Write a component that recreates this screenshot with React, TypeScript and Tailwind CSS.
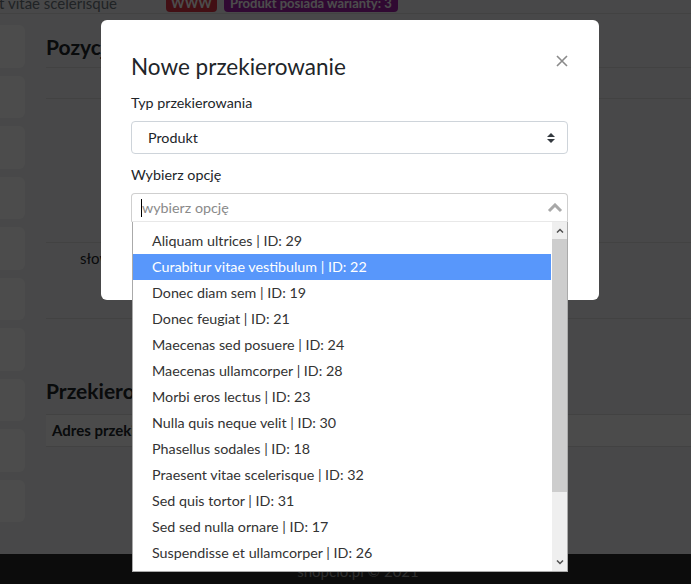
import { useState } from 'react';

const options = [
  { name: 'Aliquam ultrices', id: 29 },
  { name: 'Curabitur vitae vestibulum', id: 22 },
  { name: 'Donec diam sem', id: 19 },
  { name: 'Donec feugiat', id: 21 },
  { name: 'Maecenas sed posuere', id: 24 },
  { name: 'Maecenas ullamcorper', id: 28 },
  { name: 'Morbi eros lectus', id: 23 },
  { name: 'Nulla quis neque velit', id: 30 },
  { name: 'Phasellus sodales', id: 18 },
  { name: 'Praesent vitae scelerisque', id: 32 },
  { name: 'Sed quis tortor', id: 31 },
  { name: 'Sed sed nulla ornare', id: 17 },
  { name: 'Suspendisse et ullamcorper', id: 26 },
  { name: 'Vivamus eget nibh', id: 25 },
];

function Background() {
  return (
    <div className="flex h-[584px] flex-col overflow-hidden bg-[#f1f2f4] text-[#212529]">
      {/* cut-off table row */}
      <div className="flex h-[14px] shrink-0 items-end border-b border-[#dcdcdc] text-[15px] whitespace-nowrap">
        <div className="flex w-[117px] justify-end overflow-hidden leading-[20px] text-[#6c757d]">
          Praesent vitae scelerisque
        </div>
        <div className="ml-[49px] flex h-full items-end gap-[7px] pb-[1px]">
          <span className="rounded bg-[#dc3545] px-[5px] text-[13px] leading-[18px] font-bold text-white">WWW</span>
          <span className="rounded bg-[#a020a8] px-[6px] text-[13px] leading-[18px] font-bold text-white">
            Produkt posiada warianty: 3
          </span>
        </div>
      </div>

      <div className="flex flex-1">
        {/* sidebar tiles */}
        <div className="flex w-[25px] shrink-0 flex-col gap-[8px] pt-[11px]">
          {Array.from({ length: 10 }).map((_, i) => (
            <div key={i} className="h-[42.5px] rounded-r-md bg-white" />
          ))}
        </div>

        <div className="flex-1 pl-[21px]">
          <h2 className="pt-[21px] text-[21px] leading-[24px] font-bold">Pozycje menu</h2>
          <div className="mt-[8px] h-[32px] border-y border-[#dcdcdc]" />
          <div className="h-[143px]" />
          <div className="flex h-[77px] items-start border-y border-[#dcdcdc] pl-[34px] pt-[4px] text-[15px]">
            słowa kluczowe
          </div>
          <h2 className="mt-[60px] text-[21px] leading-[24px] font-bold">Przekierowania</h2>
          <div className="mt-[11px] flex h-[33px] items-center border-y border-[#dcdcdc] bg-[#fafafa] pl-[6px] text-[15px] font-bold">
            Adres przekierowania
          </div>
        </div>
      </div>

      <div className="flex h-[30px] shrink-0 items-center justify-center bg-[#2b2b2b] pl-[25px] pt-[5px] text-[15px] text-[#9a9a9a]">
        shopcio.pl © 2021
      </div>
    </div>
  );
}

export default function App() {
  const [active] = useState(1);

  return (
    <div className="relative font-[Lato,sans-serif]">
      <Background />

      {/* Modal */}
      <div className="fixed inset-0 bg-black/70">
        <div className="ml-[101px] mt-[20px] w-[498px] rounded-md bg-white pl-[30px] pr-[31px] pt-[30px] pb-[30px] text-[#212529]">
          <div className="flex items-start justify-between">
            <h2 className="text-[22.5px] leading-[34px]">Nowe przekierowanie</h2>
            <svg width="12" height="12" viewBox="0 0 12 12" className="mt-[5px]">
              <path d="M1 1 L11 11 M11 1 L1 11" stroke="#8a8a8a" strokeWidth="1.6" />
            </svg>
          </div>

          <div className="mt-[8px] text-[14.3px] leading-[22px]">Typ przekierowania</div>
          <div className="mt-[7px] flex h-[33px] items-center justify-between rounded border border-[#ced4da] pl-[16px] pr-[12px] text-[14.3px]">
            <span>Produkt</span>
            <svg width="8" height="10" viewBox="0 0 8 10">
              <path d="M4 0 L8 4 L0 4 Z M0 6 L8 6 L4 10 Z" fill="#343a40" />
            </svg>
          </div>

          <div className="mt-[10px] text-[14.3px] leading-[22px]">Wybierz opcję</div>
          <div className="relative mt-[7px]">
            <div className="flex h-[29px] items-center justify-between rounded-t border border-[#cfcfcf] border-b-[#e8e8e8] pl-[9px] pr-[4px] text-[14.3px]">
              <div className="flex items-center">
                <span className="h-[18px] w-px bg-black" />
                <span className="text-[#8a8a8a]">wybierz opcję</span>
              </div>
              <svg width="16" height="10" viewBox="0 0 16 10">
                <path d="M2 8 L8 2 L14 8" fill="none" stroke="#a8a8a8" strokeWidth="3" />
              </svg>
            </div>

            {/* dropdown list */}
            <div className="absolute top-full right-0 left-[1px] z-10 flex h-[350px] border border-t-0 border-[#aaaaaa] bg-white">
              <ul className="flex-1 overflow-hidden pt-[6px] text-[14.3px] text-[#333]">
                {options.map((o, i) => (
                  <li
                    key={o.id}
                    className={`flex h-[26px] items-center pl-[19px] whitespace-nowrap ${
                      i === active ? 'bg-[#5897fb] text-white' : ''
                    }`}
                  >
                    {o.name} | ID: {o.id}
                  </li>
                ))}
              </ul>
              <div className="flex w-[16px] flex-col border-l border-white bg-[#efefef]">
                <div className="flex h-[17px] items-center justify-center">
                  <svg width="8" height="5" viewBox="0 0 8 5">
                    <path d="M1 4.5 L4 1.5 L7 4.5" fill="none" stroke="#505050" strokeWidth="1.5" />
                  </svg>
                </div>
                <div className="h-[253px] bg-[#cdcdcd]" />
                <div className="flex-1" />
                <div className="flex h-[17px] items-center justify-center">
                  <svg width="8" height="5" viewBox="0 0 8 5">
                    <path d="M1 0.5 L4 3.5 L7 0.5" fill="none" stroke="#505050" strokeWidth="1.5" />
                  </svg>
                </div>
              </div>
            </div>
          </div>

          <div className="mt-[18px] flex h-[30px] justify-end gap-2" />
        </div>
      </div>
    </div>
  );
}
